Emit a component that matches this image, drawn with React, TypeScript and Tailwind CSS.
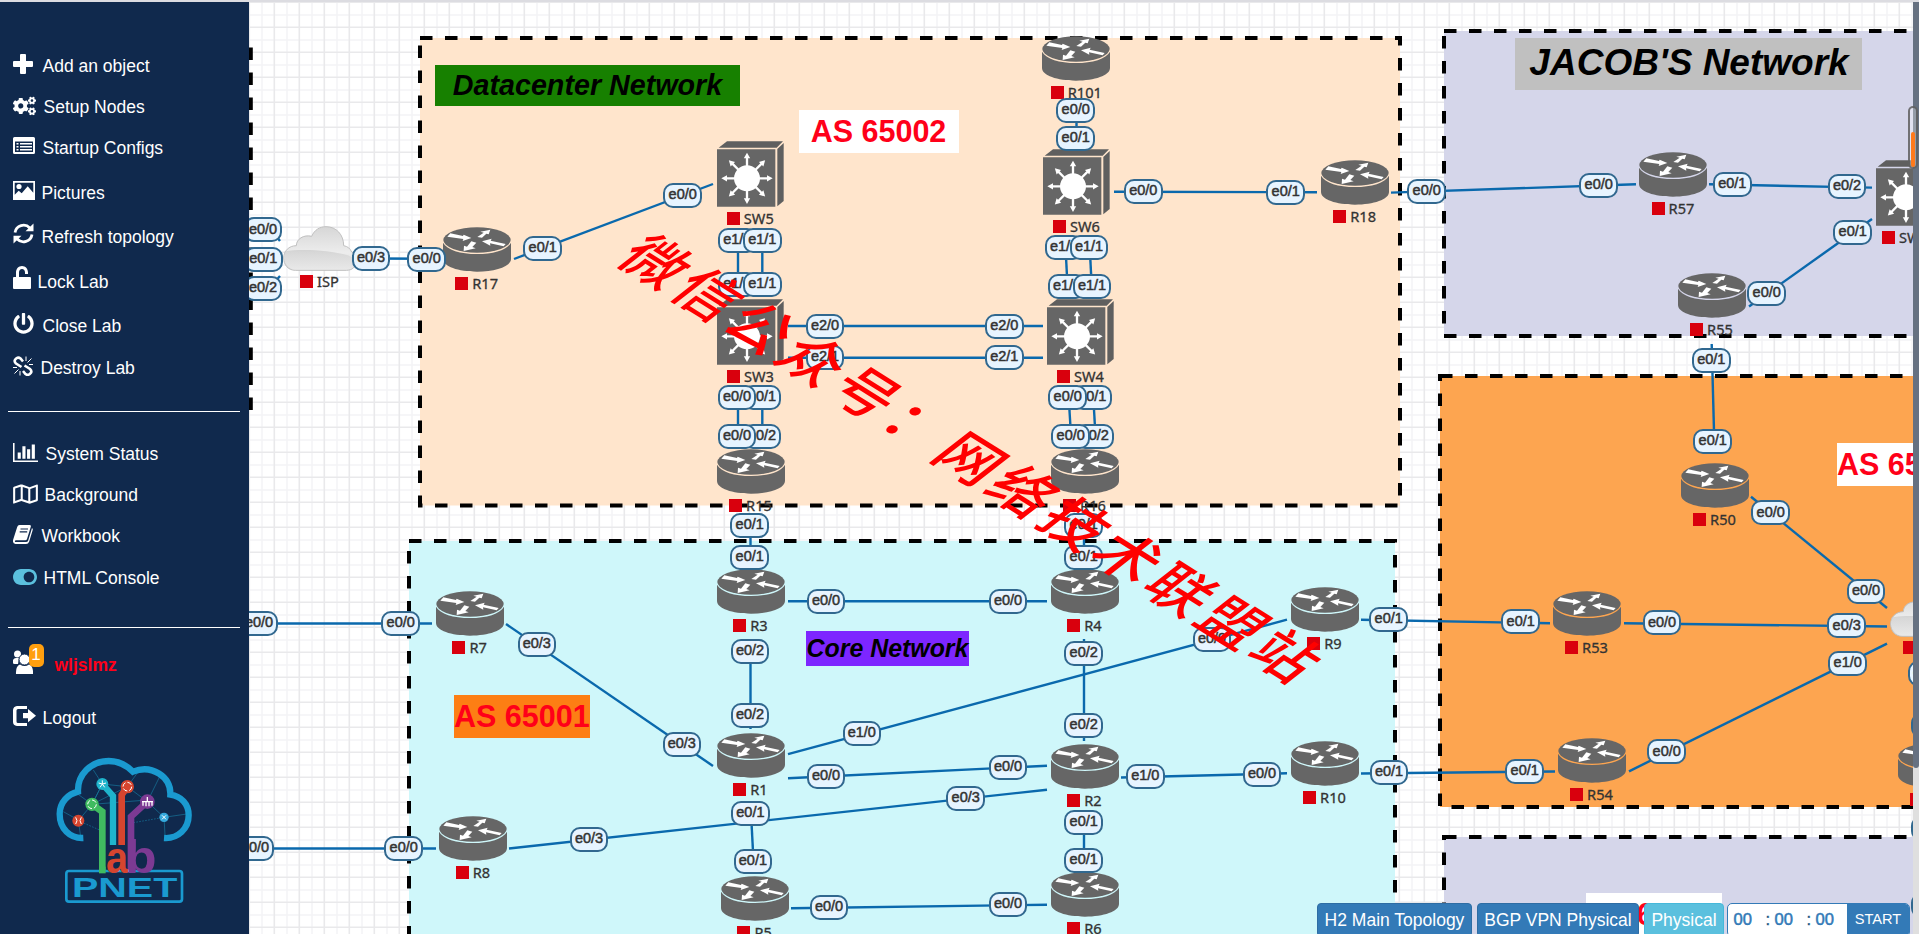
import React from "react";
import { FaCogs, FaPowerOff, FaRegMap, FaToggleOn } from "react-icons/fa";

type Link = [number, number, number, number];
type Port = [string, number, number];
type NodeKind = "router" | "switch" | "cloud";
type TopoNode = { kind: NodeKind; name: string; x: number; y: number };
type Zone = { x: number; y: number; w: number; h: number; fill: string };

const zones: Zone[] = [
  { x: 420, y: 38, w: 980, h: 467.5, fill: "#ffe5cc" },
  { x: 409, y: 541, w: 986, h: 500.25, fill: "#cff7fa" },
  { x: 1444, y: 31, w: 503.75, h: 305, fill: "#d5d6ea" },
  { x: 1440, y: 376, w: 509, h: 431, fill: "#fda550" },
  { x: 1444, y: 837, w: 503.75, h: 310.2, fill: "#d5d6ea" },
];

const links: Link[] = [
  [371, 258.5, 432, 258.8],
  [514, 259, 713, 184],
  [738, 240, 738, 284],
  [762.3, 240, 762.3, 284],
  [1076.5, 110, 1076.5, 138],
  [1114, 191.7, 1317, 192.3],
  [1391, 192.6, 1636, 184.3],
  [1709, 184.3, 1872, 187.6],
  [1749, 306.5, 1872, 219],
  [1711.7, 344, 1714.5, 450],
  [788, 326, 1043, 326],
  [788, 357.8, 1043, 357.8],
  [1065.5, 247, 1067.5, 286],
  [1089.7, 247, 1091.7, 286],
  [738, 397, 738, 436],
  [762.3, 397, 762.3, 436],
  [1068.7, 397, 1071, 436],
  [1093.3, 397, 1095.5, 436],
  [750.5, 525, 750.5, 557],
  [1084, 525, 1084, 557],
  [788, 601.3, 1047, 601.3],
  [750.5, 640, 750.5, 729],
  [751, 813, 753.5, 861],
  [506, 624, 713, 766],
  [509, 848.5, 1047, 789.7],
  [250, 623.5, 432, 623.5],
  [250, 848.5, 436, 848.5],
  [788, 754.2, 1287, 619.7],
  [788, 778.3, 1047, 765.7],
  [791, 908.3, 1047, 904.7],
  [1084, 639, 1084, 741],
  [1121, 777.5, 1287, 773.3],
  [1084, 822, 1084, 860],
  [1361, 619.7, 1550, 623.3],
  [1361, 773.5, 1555, 771.5],
  [1624, 623.3, 1887, 626.5],
  [1751, 496.7, 1887, 608],
  [1629, 771.3, 1887, 643.7],
  [273, 232, 280, 241],
  [273, 284, 280, 276],
];

const ports: Port[] = [
  ["e0/0", 263, 229.7], ["e0/1", 263.3, 259], ["e0/2", 263, 288], ["e0/3", 371, 258],
  ["e0/0", 426.7, 259], ["e0/1", 542.7, 248], ["e0/0", 682.7, 195],
  ["e1/0", 737.3, 240], ["e1/1", 762.3, 240], ["e1/0", 737.3, 284], ["e1/1", 762.3, 284],
  ["e0/0", 1075.7, 110], ["e0/1", 1075.7, 138], ["e0/0", 1143.3, 191], ["e0/1", 1285.7, 192],
  ["e1/0", 1064, 247], ["e1/1", 1089, 247], ["e1/0", 1067, 286], ["e1/1", 1092, 286],
  ["e0/0", 1426.7, 191], ["e0/0", 1598.7, 185], ["e0/1", 1732.3, 184], ["e0/2", 1847, 186],
  ["e0/1", 1852.7, 232], ["e0/0", 1766.7, 293], ["e0/1", 1711.3, 360],
  ["e2/0", 825, 326], ["e2/1", 825, 357], ["e2/0", 1004.3, 326], ["e2/1", 1004.3, 357],
  ["e0/1", 762, 397], ["e0/0", 737, 397], ["e0/2", 762, 436], ["e0/0", 737, 436],
  ["e0/1", 1092.3, 397], ["e0/0", 1067.7, 397], ["e0/2", 1094.7, 436], ["e0/0", 1070.7, 436],
  ["e0/1", 749.7, 525], ["e0/1", 749.7, 557], ["e0/1", 1083.7, 525], ["e0/1", 1083.7, 557],
  ["e0/0", 259, 623], ["e0/0", 255, 848], ["e0/0", 400.7, 623], ["e0/0", 403.7, 848],
  ["e0/3", 536.8, 644], ["e0/3", 681.8, 744], ["e0/3", 589, 839], ["e0/0", 826, 601],
  ["e0/2", 750, 651], ["e0/2", 750, 715], ["e1/0", 861.8, 733], ["e0/0", 826, 776],
  ["e0/1", 750.4, 813], ["e0/1", 752.9, 861], ["e0/0", 829, 907],
  ["e0/0", 1008, 601], ["e0/2", 1083.7, 653], ["e0/2", 1083.7, 725], ["e0/0", 1008, 767],
  ["e1/0", 1145.3, 776], ["e0/0", 1262, 774], ["e0/1", 1389, 772], ["e0/1", 1388.7, 619.3],
  ["e0/0", 1212, 639], ["e0/3", 965.7, 798], ["e0/1", 1083.7, 822], ["e0/1", 1083.7, 860],
  ["e0/0", 1008, 904],
  ["e0/1", 1712.7, 441], ["e0/0", 1770.7, 512.7], ["e0/0", 1866, 591], ["e0/1", 1520.7, 621.7],
  ["e0/0", 1662, 622.8], ["e0/3", 1846.7, 625.5], ["e1/0", 1847.7, 663], ["e0/1", 1524.7, 771],
  ["e0/0", 1666.7, 751.7],
  ["e0/1", 1927, 673], ["e0/0", 1930, 725], ["e0/1", 1930.5, 828], ["e0/1", 1930.5, 905],
];

const nodes: TopoNode[] = [
  { kind: "cloud", name: "ISP", x: 319.5, y: 226 },
  { kind: "router", name: "R17", x: 476.7, y: 227 },
  { kind: "router", name: "R101", x: 1076.3, y: 36 },
  { kind: "router", name: "R18", x: 1354.7, y: 159.5 },
  { kind: "router", name: "R57", x: 1673, y: 152 },
  { kind: "router", name: "R55", x: 1711.5, y: 273.3 },
  { kind: "router", name: "R15", x: 750.5, y: 448.7 },
  { kind: "router", name: "R16", x: 1084.5, y: 448.7 },
  { kind: "router", name: "R3", x: 750.5, y: 568.7 },
  { kind: "router", name: "R4", x: 1084.5, y: 568.7 },
  { kind: "router", name: "R1", x: 750.5, y: 733.3 },
  { kind: "router", name: "R2", x: 1084.5, y: 744.3 },
  { kind: "router", name: "R7", x: 469.6, y: 591 },
  { kind: "router", name: "R8", x: 473, y: 816 },
  { kind: "router", name: "R5", x: 754.6, y: 876 },
  { kind: "router", name: "R6", x: 1084.5, y: 872.3 },
  { kind: "router", name: "R9", x: 1324.5, y: 587 },
  { kind: "router", name: "R10", x: 1324.5, y: 741.3 },
  { kind: "router", name: "R50", x: 1714.5, y: 463.3 },
  { kind: "router", name: "R53", x: 1586.5, y: 591 },
  { kind: "router", name: "R54", x: 1591.5, y: 738.3 },
  { kind: "router", name: "R52", x: 1931.7, y: 743.3 },
  { kind: "switch", name: "SW5", x: 750.3, y: 141 },
  { kind: "switch", name: "SW6", x: 1076.5, y: 149 },
  { kind: "switch", name: "SW3", x: 750.5, y: 298.7 },
  { kind: "switch", name: "SW4", x: 1080.5, y: 298.7 },
  { kind: "switch", name: "SW51", x: 1909.7, y: 159.7 },
  { kind: "cloud", name: "ISP2", x: 1927, y: 592 },
];

function RouterIcon() {
  return (
    <svg className="h-[45px] w-[68px]" viewBox="0 0 204 135">
      <ellipse cx="102" cy="39" rx="101" ry="38" fill="#666" />
      <path d="M0 47C12 69 52 81 102 81s90-12 102-34v49c0 22-46 38-102 38S0 118 0 96z" fill="#666" />
      <g fill="#fff">
        <path d="M13 29l9-10 38 8 2-4 23 10-26 9 2-6z" />
        <path d="M103 30l19-13-10-3 30-6-5 14-7-2-13 12z" />
        <path d="M85 43l15 4-12 13 10 4-36 8 1-16 9 3z" />
        <path d="M117 43l29-8-3 6 45 10-6 7-41-9 1 7z" />
      </g>
    </svg>
  );
}

function SwitchIcon() {
  const angles = [0, 45, 90, 135, 180, 225, 270, 315];
  return (
    <svg className="h-[66px] w-[67px]" viewBox="0 0 201 198">
      <path d="M5 20L30 1h168l-19 19z" fill="#5f5f5f" />
      <path d="M0 25h175v172H0z" fill="#666" />
      <path d="M181 24l19-18v174l-19 16z" fill="#5f5f5f" />
      <circle cx="90" cy="112" r="39" fill="#fff" />
      <g fill="#fff">
        {angles.map((a) => (
          <path key={a} d="M86.500 80V52h-6l9.500-17 9.500 17h-6v28z" transform={`rotate(${a} 90 112)`} />
        ))}
      </g>
    </svg>
  );
}

function CloudIcon() {
  return (
    <svg className="h-[45px] w-[74px]" viewBox="0 0 222 135">
      <defs>
        <linearGradient id="cloudBody" x1="0" y1="0" x2="0" y2="1">
          <stop offset="0" stopColor="#d6d6d6" />
          <stop offset="0.6" stopColor="#ededed" />
          <stop offset="1" stopColor="#d6d6d6" />
        </linearGradient>
        <linearGradient id="cloudShade" x1="0" y1="0" x2="0" y2="1">
          <stop offset="0" stopColor="#c9c9c9" />
          <stop offset="1" stopColor="#f0f0f0" />
        </linearGradient>
      </defs>
      <path
        d="M37 133C15 133 2 116 2 96c0-21 16-37 38-37 0-20 22-34 46-28C94 12 110 2 129 2c31 0 53 24 53 57 12 2 20 9 24 19 10 6 14 14 14 25 0 19-12 30-30 30z"
        fill="url(#cloudBody)" stroke="#c0c0c0" strokeWidth="3"
      />
      <path d="M5 76c50-8 130-4 190 12 20 8 24 20 22 26-4 12-14 17-27 17H37C14 131 2 108 5 76z" fill="url(#cloudShade)" opacity="0.7" />
    </svg>
  );
}

function NodeView({ node }: { node: TopoNode }) {
  return (
    <div
      className="absolute flex w-24 flex-col items-center"
      style={{ left: node.x - 48, top: node.y }}
    >
      {node.kind === "router" && <RouterIcon />}
      {node.kind === "switch" && <SwitchIcon />}
      {node.kind === "cloud" && <CloudIcon />}
      <div className={`flex items-center gap-1 ${node.kind === "cloud" ? "mt-1" : "mt-[5px]"}`}>
        <span className="size-[13px] bg-[#d9000d]" />
        <span className="font-['Noto_Sans',sans-serif] text-[14.6px] leading-[13px] text-[#333] [-webkit-text-stroke:0.3px_#333]">{node.name}</span>
      </div>
    </div>
  );
}

function PortLabel({ port }: { port: Port }) {
  return (
    <div
      className="absolute flex h-[25px] w-[38.5px] items-center justify-center rounded-[10px] border-2 border-[#31688f] bg-[#e7f4ff] text-[14.5px] font-normal text-[#333] [-webkit-text-stroke:0.5px_#333]"
      style={{ left: port[1] - 19.25, top: port[2] - 12.5 }}
    >
      {port[0]}
    </div>
  );
}

function TopologyBackdrop() {
  return (
    <svg className="absolute left-0 top-0 h-[934px] w-[1919px]" viewBox="0 0 1919 934">
      <defs>
        <pattern id="grid" x="249" y="2" width="25" height="25" patternUnits="userSpaceOnUse">
          <path d="M13 0V25M0 13H25" stroke="#f4f4f6" strokeWidth="1.5" />
          <path d="M0.3 0V25M25.3 0V25M0 0.3H25M0 25.3H25" stroke="#e9e9eb" strokeWidth="1.6" />
        </pattern>
      </defs>
      <rect width="1919" height="934" fill="#fff" />
      <rect width="1919" height="934" fill="url(#grid)" />
      <path d="M250.800 47.500V411" stroke="#000" strokeWidth="4" strokeDasharray="12.5" />
      {zones.map((z, i) => (
        <rect
          key={i} x={z.x} y={z.y} width={z.w} height={z.h} fill={z.fill}
          stroke="#000" strokeWidth="4" strokeDasharray="12.5"
        />
      ))}
    </svg>
  );
}

function TopologyLinks() {
  return (
    <svg className="absolute left-0 top-0 h-[934px] w-[1919px]" viewBox="0 0 1919 934">
      {links.map((l, i) => (
        <line key={i} x1={l[0]} y1={l[1]} x2={l[2]} y2={l[3]} stroke="#0a69ad" strokeWidth="2.4" />
      ))}
    </svg>
  );
}

function Topology() {
  return (
    <main className="relative flex-1 overflow-hidden bg-white">
      <div className="absolute -left-[249px] -top-0.5 h-[934px] w-[1919px]">
        <TopologyBackdrop />
        <div className="absolute left-[435px] top-[65px] flex h-[41px] w-[305px] items-center justify-center whitespace-nowrap bg-[#178000] text-[28.7px] font-bold italic text-black">
          Datacenter Network
        </div>
        <div className="absolute left-[799px] top-[110px] flex h-[43px] w-[160px] items-center justify-center whitespace-nowrap bg-white pr-px text-[30.5px] font-bold text-[#ff0019]">
          AS 65002
        </div>
        <div className="absolute left-[1515px] top-[38px] flex h-[52px] w-[347px] items-center justify-center whitespace-nowrap bg-[#c0c0c0] pb-0.5 pl-px text-[37px] font-bold italic text-black">
          JACOB'S Network
        </div>
        <div className="absolute left-[454px] top-[695px] flex h-[43px] w-[136px] items-center whitespace-nowrap bg-[#fd7e14] text-[30.5px] font-bold text-[#ff0019]">
          AS 65001
        </div>
        <div className="absolute left-[806px] top-[631px] flex h-[35px] w-[163px] items-center justify-center whitespace-nowrap bg-[#7d26ff] text-[24.9px] font-bold italic text-black">
          Core Network
        </div>
        <div className="absolute left-[1837px] top-[443px] flex h-[43px] w-[136px] items-center whitespace-nowrap bg-white text-[30.5px] font-bold text-[#ff0019]">
          AS 65003
        </div>
        <div className="absolute left-[1586px] top-[893px] flex h-[43px] w-[136px] items-center whitespace-nowrap bg-white text-[30.5px] font-bold text-[#ff0019]">
          AS 65004
        </div>
        <TopologyLinks />
        {nodes.map((n, i) => (
          <NodeView key={i} node={n} />
        ))}
        {ports.map((p, i) => (
          <PortLabel key={i} port={p} />
        ))}
        <div className="absolute left-[575px] top-[421px] flex h-[74px] w-[800px] rotate-[32deg] items-center justify-center whitespace-nowrap font-['Noto_Sans_CJK_SC',sans-serif] text-[57px] font-medium tracking-[4.9px] text-[#ff0000]">
          <span className="block -skew-x-[20deg]">微信公众号：网络技术联盟站</span>
        </div>
      </div>
    </main>
  );
}

const iconClass = "block fill-current";

function PlusIcon() {
  return <svg className={`${iconClass} mb-[5px] size-5`} viewBox="0 0 20 20"><path d="M7 1q0-1 1-1h4q1 0 1 1v6h6q1 0 1 1v4q0 1-1 1h-6v6q0 1-1 1H8q-1 0-1-1v-6H1q-1 0-1-1V8q0-1 1-1h6z" /></svg>;
}
function ListIcon() {
  return <svg className={`${iconClass} mb-[5px] h-[17px] w-[22px]`} viewBox="0 0 22 17"><path fillRule="evenodd" d="M1.500 0h19Q22 0 22 1.500v14Q22 17 20.500 17h-19Q0 17 0 15.500v-14Q0 0 1.500 0zM2 4.500v10.500h18V4.500z" /><path d="M3.500 6h2v1.500h-2zM7 6h12v1.500H7zM3.500 9h2v1.500h-2zM7 9h12v1.500H7zM3.500 12h2v1.500h-2zM7 12h12v1.500H7z" /></svg>;
}
function PictureIcon() {
  return <svg className={`${iconClass} mb-[6px] h-[19px] w-[22px]`} viewBox="0 0 22 19"><path fillRule="evenodd" d="M0 0h22v19H0zM1.700 1.700v12l4-4 3 2.500 6-7 5.600 6.500v-10z" /><circle cx="6" cy="5.500" r="2.600" /></svg>;
}
function RefreshIcon() {
  return (
    <svg className="mb-[7px] block size-[21px]" viewBox="0 0 21 21">
      <path d="M2 9.500A8.600 8.600 0 0 1 16.800 5M19 11.500A8.600 8.600 0 0 1 4.200 16" fill="none" stroke="currentColor" strokeWidth="2.800" />
      <path d="M20.500 .5V8.200H12.500zM.5 20.500V12.800H8.500z" fill="currentColor" />
    </svg>
  );
}
function UnlockIcon() {
  return <svg className={`${iconClass} mb-[10px] h-[23px] w-[18px]`} viewBox="0 0 18 23"><path d="M1 11h2V6.500C3 2.800 5.600 0 9 0s6 2.800 6 6.500V8h-3V6.500C12 4.500 10.800 3 9 3S6 4.500 6 6.500V11h11q1 0 1 1v10q0 1-1 1H1q-1 0-1-1V12q0-1 1-1z" /></svg>;
}
function BrokenLinkIcon() {
  return (
    <svg className="mb-1 block size-5" viewBox="0 0 20 20" fill="none" stroke="currentColor">
      <path d="M8.500 11L3 7.500Q.8 5.500 2.200 3.500L3.500 2.200Q5.500 .8 7.500 2.500l2.500 3M11.500 9.500l5.500 3.500Q19.200 15 17.800 17l-1.300 1.300q-2 1.400-4-.3L10 15" strokeWidth="2.600" />
      <path d="M13 .5V5M14.500 6.500l4-4M16 8.500h4M7 19.500V15M5.500 13.500l-4 4M0 11.500h4" strokeWidth="1" />
    </svg>
  );
}
function ChartIcon() {
  return <svg className={`${iconClass} mb-1 h-[19px] w-[25px]`} viewBox="0 128 2048 1536" preserveAspectRatio="none"><path d="M640 896v512H384V896h256zm384-512v1024H768V384h256zm1024 1152v128H0V128h128v1408h1920zm-640-896v768h-256V640h256zm384-384v1152h-256V256h256z" /></svg>;
}
function BookIcon() {
  return (
    <svg className="mb-[3px] block h-[19px] w-5" viewBox="0 0 20 19">
      <path d="M6.500 0h10q1.800 0 1.300 1.800L14 14q-.4 1.300-1.700 1.300H3Q1.600 15.500 2 17h11q1.700 0 2.200-1.600L19 3q1 .8.700 2l-3.500 11.500Q15.400 19 13 19H2.500Q-.8 18.500.2 14.500L4.200 2Q4.800 0 6.500 0z" fill="currentColor" />
      <path d="M7.500 4h7.500M6.700 6.800h7.500" stroke="#10294d" strokeWidth="1.200" />
    </svg>
  );
}
function UsersIcon() {
  return (
    <span className="relative mb-[7px] block h-6 w-8">
      <svg className="block h-6 w-5 fill-current" viewBox="0 0 20 24">
        <circle cx="4.500" cy="4" r="3.500" />
        <path d="M0 13V10q1-2 3-2h3l-1 6H1.500q-1.500 0-1.500-1z" />
        <circle cx="11.500" cy="9.500" r="5.500" stroke="#10294d" />
        <path d="M3 24q-.5-8 4-9.500 4.500 3 9 0 4.500 1.500 4 9.500z" />
      </svg>
      <span className="absolute -top-[6px] left-4 flex h-[23px] w-[15px] items-center justify-center rounded-[5px] bg-[#ff9f0f] text-[17px] text-white">1</span>
    </span>
  );
}
function LogoutIcon() {
  return <svg className={`${iconClass} mb-1 h-5 w-[23px]`} viewBox="0 0 23 20"><path d="M14 0v3H5Q3.500 3 3.500 4.500v11Q3.500 17 5 17h9v3H4q-4-.5-4-4V4q.3-3.500 4-4z" /><path d="M10 7h5V3l8 6.700-8 6.600v-4h-5z" /></svg>;
}

type Item = { label: string; icon: React.ReactNode; slot: string; gap: string; text?: string };

const labItems: Item[] = [
  { label: "Add an object", icon: <PlusIcon />, slot: "w-[30px]", gap: "" },
  { label: "Setup Nodes", icon: <FaCogs className="mb-[3px] h-[22px] w-[23px]" />, slot: "w-[31px]", gap: "mt-[17px]" },
  { label: "Startup Configs", icon: <ListIcon />, slot: "w-[30px]", gap: "mt-[17px]" },
  { label: "Pictures", icon: <PictureIcon />, slot: "w-[29px]", gap: "mt-[21px]" },
  { label: "Refresh topology", icon: <RefreshIcon />, slot: "w-[29px]", gap: "mt-5" },
  { label: "Lock Lab", icon: <UnlockIcon />, slot: "w-[25px]", gap: "mt-[21px]" },
  { label: "Close Lab", icon: <FaPowerOff className="mb-[5px] size-[21px]" />, slot: "w-[30px]", gap: "mt-5" },
  { label: "Destroy Lab", icon: <BrokenLinkIcon />, slot: "w-[28px]", gap: "mt-[18px]" },
];

const toolItems: Item[] = [
  { label: "System Status", icon: <ChartIcon />, slot: "w-[33px]", gap: "mt-[30px]" },
  { label: "Background", icon: <FaRegMap className="mb-[3px] h-[22px] w-[25px]" />, slot: "w-8", gap: "mt-[17px]" },
  { label: "Workbook", icon: <BookIcon />, slot: "w-[29px]", gap: "mt-[17px]" },
  { label: "HTML Console", icon: <FaToggleOn className="mb-[2px] size-6 text-[#5bc0de]" />, slot: "w-[31px]", gap: "mt-[18px]" },
];

const userItems: Item[] = [
  { label: "wljslmz", icon: <UsersIcon />, slot: "w-[42px]", gap: "mt-[25px]", text: "font-bold text-[#ff0019]" },
  { label: "Logout", icon: <LogoutIcon />, slot: "w-[30px]", gap: "mt-[29px]" },
];

function MenuItem({ item }: { item: Item }) {
  return (
    <div className={`flex h-6 items-center pl-[12.5px] ${item.gap}`}>
      <span className={`flex shrink-0 ${item.slot}`}>{item.icon}</span>
      <span className={`whitespace-nowrap text-[17.5px] leading-6 ${item.text ?? ""}`}>{item.label}</span>
    </div>
  );
}

function Logo() {
  return (
    <svg className="ml-10 mt-2.5 block h-[180px] w-[170px]" viewBox="0 0 510 540">
      <g stroke="#17799f" strokeWidth="2" fill="none">
        <path d="M160 90L187 132L156 193L115 242L122 290M70 215L115 240M187 132L262 140L322 185L372 232L375 285M156 193L262 140L295 95M322 185L358 112M372 232L440 222M156 193L322 180M187 132L156 193M110 160L156 193" />
        <path d="M115 242L190 275M280 248L372 232" strokeDasharray="5 4" />
      </g>
      <path d="M130 294C90 296 59 266 59 222C59 186 84 163 114 155C112 105 152 63 206 63C238 63 262 78 279 95C335 72 393 110 391 164C424 169 446 192 446 226C446 266 414 297 372 294" fill="none" stroke="#1a9ad0" strokeWidth="19" />
      <path d="M156 193L187 215V400" fill="none" stroke="#40bb60" strokeWidth="20" />
      <path d="M187 132L219 168V315" fill="none" stroke="#1fb4cc" strokeWidth="19" />
      <path d="M262 140L245 165V315" fill="none" stroke="#d6452f" strokeWidth="20" />
      <path d="M322 185L273 230V400" fill="none" stroke="#7c3a93" strokeWidth="20" />
      <rect x="79" y="393" width="347" height="92" rx="8" fill="#10294d" stroke="#1a9ad0" strokeWidth="8" />
      <path d="M187 380V400" stroke="#40bb60" strokeWidth="20" />
      <text x="198" y="399" fontFamily="Liberation Sans, sans-serif" fontWeight="700" fontSize="132" textLength="66" lengthAdjust="spacingAndGlyphs" fill="#d6452f">a</text>
      <text x="256" y="399" fontFamily="Liberation Sans, sans-serif" fontSize="140" fontWeight="700" textLength="94" lengthAdjust="spacingAndGlyphs" fill="#7c3a93">b</text>
      <text x="96" y="471" fontFamily="Liberation Sans, sans-serif" fontWeight="700" fontSize="84" textLength="316" lengthAdjust="spacingAndGlyphs" fill="#1a9ad0">PNET</text>
      <circle cx="187" cy="132" r="18" fill="#1fb4cc" />
      <circle cx="156" cy="193" r="20" fill="#40bb60" />
      <circle cx="262" cy="140" r="20" fill="#d6452f" />
      <circle cx="322" cy="185" r="22" fill="#7c3a93" />
      <circle cx="115" cy="242" r="18" fill="#d6452f" />
      <circle cx="372" cy="232" r="14" fill="#35a8dc" />
      <g fill="none" stroke="#fff" strokeWidth="3">
        <path d="M107 232q8 10 0 20M124 232q-8 10 0 20M366 226l12 12M378 226l-12 12" />
        <circle cx="156" cy="193" r="13" strokeDasharray="14 6" />
        <circle cx="262" cy="140" r="13" strokeDasharray="14 6" />
        <path d="M187 132V121M187 132L176 129M187 132L198 129M187 132L180 142M187 132L194 142" />
        <path d="M306 185H339M322 185V171M309 185V197M318 185V199M327 185V199M336 185V197" strokeWidth="4" />
      </g>
    </svg>
  );
}

function Sidebar() {
  return (
    <aside className="w-[249px] shrink-0 overflow-hidden bg-[#10294d] pt-[52px] text-white">
      {labItems.map((it) => <MenuItem key={it.label} item={it} />)}
      <div className="ml-2 mt-[31px] h-px w-[232px] bg-white" />
      {toolItems.map((it) => <MenuItem key={it.label} item={it} />)}
      <div className="ml-2 mt-[37px] h-px w-[232px] bg-white" />
      {userItems.map((it) => <MenuItem key={it.label} item={it} />)}
      <Logo />
    </aside>
  );
}

function BottomBar() {
  return (
    <div className="absolute left-[1317px] top-[903px] flex h-[34px] text-[17.5px] text-white">
      <div className="flex w-[155px] items-center justify-center whitespace-nowrap rounded-[4px] border border-[#2e6da4] bg-[#337ab7]">H2 Main Topology</div>
      <div className="ml-[5px] flex w-[162px] items-center justify-center whitespace-nowrap rounded-[4px] border border-[#2e6da4] bg-[#337ab7]">BGP VPN Physical</div>
      <div className="ml-[5px] flex w-20 items-center justify-center rounded-[4px] border border-[#46b8da] bg-[#5bc0de]">Physical</div>
      <div className="ml-[3px] flex w-[183px] overflow-hidden rounded-[5px] border border-[#337ab7] bg-white">
        <div className="flex w-[119px] items-center pl-[5.5px] text-[16.6px] text-[#337ab7] [-webkit-text-stroke:0.5px_#337ab7]">
          <span className="w-8">00</span>
          <span className="w-[9px] text-[#333]">:</span>
          <span className="w-8">00</span>
          <span className="w-[9px] text-[#333]">:</span>
          <span>00</span>
        </div>
        <div className="flex flex-1 items-center justify-center bg-[#337ab7] text-[14.6px]">START</div>
      </div>
    </div>
  );
}

export default function App() {
  return (
    <div className="relative flex h-[934px] w-[1919px] flex-col overflow-hidden bg-white font-['Liberation_Sans',Arial,sans-serif]">
      <div className="h-0.5 shrink-0 bg-[#dcdce1]" />
      <div className="flex min-h-0 flex-1">
        <Sidebar />
        <Topology />
        <div className="w-1.5 shrink-0 bg-[#dfdfdf]">
          <div className="h-[766px] rounded-b-[3px] bg-[#667181]" />
        </div>
      </div>
      <div className="absolute left-[1908px] top-[106px] flex h-[63px] w-[10px] items-end justify-center rounded-[5px] border-2 border-[#555]/80 bg-white/30">
        <div className="h-[35px] w-1 rounded-sm bg-[#ff7a1c]" />
      </div>
      <BottomBar />
    </div>
  );
}
